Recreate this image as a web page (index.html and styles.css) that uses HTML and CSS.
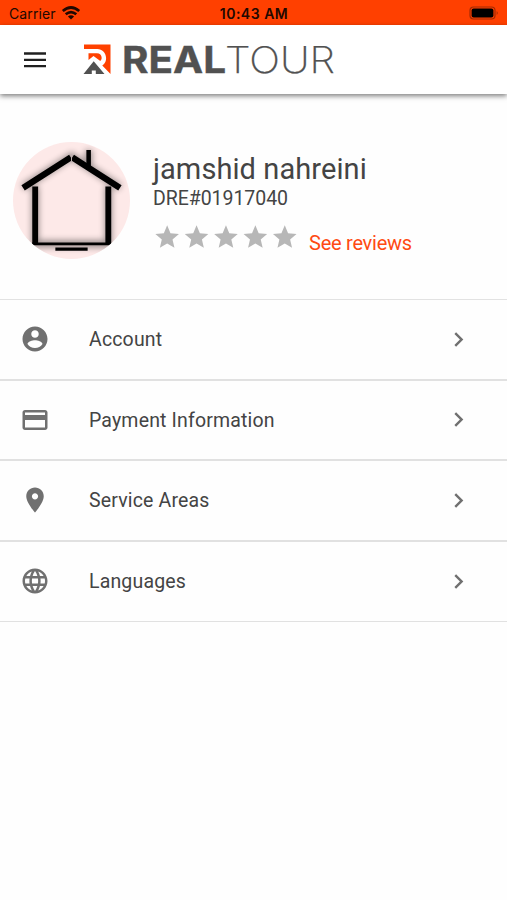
FILE: index.html
```html
<!DOCTYPE html>
<html lang="en">
<head>
<meta charset="utf-8">
<title>RealTour</title>
<link rel="stylesheet" href="styles.css">
</head>
<body>
<div class="status">
  <div class="carrier"><span>Carrier</span>
    <svg class="wifi" viewBox="0 0 18 14"><g fill="none" stroke="#210800" stroke-width="2.7"><path d="M.8 5Q9-2 17.200 5"/><path d="M3.700 8.300Q9 3.900 14.300 8.300"/></g><path d="M5.900 10.400Q9 7.900 12.100 10.400L9 13.600z" fill="#210800"/></svg>
  </div>
  <time class="clock">10:43 AM</time>
  <svg class="battery" viewBox="0 0 31 14"><rect x="1" y="1" width="25" height="12" rx="3.5" fill="none" stroke="#a32a03" stroke-width="1.2"/><rect x="2.6" y="2.6" width="21.8" height="8.8" rx="2" fill="#000"/><path d="M27.700 5Q29.800 7 27.700 9z" fill="#a32a03"/></svg>
</div>
<header class="bar">
  <svg class="menu" viewBox="0 0 24 18"><path d="M1 2.500h22M1 8.800h22M1 15.100h22" stroke="#202020" stroke-width="2.3"/></svg>
  <svg class="logo" viewBox="0 0 252 32" role="img" aria-label="RealTour">
    <path d="M1 .5h26.500v29.500L19.300 21.600Q23.300 18.800 23.100 14C22.800 8.500 19 5.200 14.500 5H1z" fill="#ff4100"/>
    <path d="M5.500 9.300H13.800Q18.500 9.300 18.700 14 18.700 15.500 17.300 17L10.500 12 5.500 16z" fill="#ff4100"/>
    <path d="M.5 30L10.700 17.300 21.500 30H12.800v-3.500H8.800V30z" fill="#515151"/>
    <text class="real" x="39" y="29" textLength="104" lengthAdjust="spacingAndGlyphs">REAL</text>
    <text class="tour" x="142" y="29" textLength="110" lengthAdjust="spacingAndGlyphs">TOUR</text>
  </svg>
</header>
<main>
  <section class="profile">
    <svg class="avatar" viewBox="0 0 116 116">
      <defs>
        <clipPath id="round"><circle cx="58" cy="58" r="58"/></clipPath>
        <filter id="soft" x="-20%" y="-20%" width="140%" height="140%"><feGaussianBlur stdDeviation="3"/></filter>
      </defs>
      <g clip-path="url(#round)">
        <path d="M0 0h116v116H0z" fill="#fde9e8"/>
        <g fill="none" stroke="#000">
          <path class="glow" d="M22 44v56M94.500 44v56M10 45L58 14 106 45M75 8v16M19 101h78" stroke-width="7" filter="url(#soft)"/>
          <path d="M22 44v57M94.500 44v57" stroke-width="5.800"/>
          <path d="M10 45.500L57.300 15.300M58.800 15.300L106 45.500" stroke-width="6.200"/>
          <path d="M75 8v16" stroke-width="4.500"/>
          <path d="M19 101h78" stroke-width="2.500"/>
          <path d="M42 106.200h32" stroke-width="3"/>
          <path d="M58 12v8" stroke="#bdb0b0" stroke-width="1"/>
        </g>
      </g>
    </svg>
    <div class="details">
      <h1>jamshid nahreini</h1>
      <p class="license">DRE#01917040</p>
      <div class="rating">
        <svg class="stars" viewBox="0 0 146 28"><defs><path id="star" d="M12 17.270L18.180 21l-1.640-7.030L22 9.240l-7.190-.61L12 2 9.190 8.630 2 9.240l5.460 4.730L5.820 21z"/></defs>
          <g fill="#b7b7b7"><use href="#star" transform="scale(1.180)"/><use href="#star" transform="translate(29.400) scale(1.180)"/><use href="#star" transform="translate(58.800) scale(1.180)"/><use href="#star" transform="translate(88.200) scale(1.180)"/><use href="#star" transform="translate(117.600) scale(1.180)"/></g></svg>
        <a class="reviews">See reviews</a>
      </div>
    </div>
  </section>
  <nav class="list">
    <a class="row"><svg class="icon" viewBox="0 0 24 24"><path d="M12 2C6.480 2 2 6.480 2 12s4.480 10 10 10 10-4.480 10-10S17.520 2 12 2zm0 3c1.660 0 3 1.340 3 3s-1.340 3-3 3-3-1.340-3-3 1.340-3 3-3zm0 14.200c-2.500 0-4.710-1.280-6-3.220.03-1.990 4-3.080 6-3.080 1.990 0 5.970 1.090 6 3.080-1.290 1.940-3.500 3.220-6 3.220z"/></svg><span class="label">Account</span><svg class="chevron" viewBox="0 0 24 24"><path d="M10 6L8.590 7.410 13.170 12l-4.580 4.590L10 18l6-6z"/></svg></a>
    <a class="row"><svg class="icon" viewBox="0 0 24 24"><path d="M20 4H4c-1.110 0-1.990.89-1.990 2L2 18c0 1.110.89 2 2 2h16c1.110 0 2-.89 2-2V6c0-1.110-.89-2-2-2zm0 14H4v-6h16v6zm0-10H4V6h16v2z"/></svg><span class="label">Payment Information</span><svg class="chevron" viewBox="0 0 24 24"><path d="M10 6L8.590 7.410 13.170 12l-4.580 4.590L10 18l6-6z"/></svg></a>
    <a class="row"><svg class="icon" viewBox="0 0 24 24"><path d="M12 2C8.130 2 5 5.130 5 9c0 5.250 7 13 7 13s7-7.750 7-13c0-3.870-3.130-7-7-7zm0 9.500c-1.380 0-2.500-1.120-2.500-2.500s1.120-2.500 2.500-2.500 2.500 1.120 2.500 2.500-1.120 2.500-2.500 2.500z"/></svg><span class="label">Service Areas</span><svg class="chevron" viewBox="0 0 24 24"><path d="M10 6L8.590 7.410 13.170 12l-4.580 4.590L10 18l6-6z"/></svg></a>
    <a class="row"><svg class="icon" viewBox="0 0 24 24"><path d="M11.990 2C6.470 2 2 6.480 2 12s4.470 10 9.990 10C17.520 22 22 17.520 22 12S17.520 2 11.990 2zm6.930 6h-2.950c-.32-1.250-.78-2.450-1.380-3.560 1.840.63 3.370 1.910 4.330 3.560zM12 4.040c.83 1.200 1.480 2.530 1.910 3.960h-3.820c.43-1.430 1.080-2.760 1.910-3.960zM4.260 14C4.100 13.360 4 12.690 4 12s.1-1.360.26-2h3.380c-.08.66-.14 1.320-.14 2s.06 1.340.14 2H4.260zm.82 2h2.950c.32 1.250.78 2.450 1.380 3.560-1.840-.63-3.370-1.900-4.330-3.560zm2.950-8H5.080c.96-1.660 2.490-2.930 4.330-3.560C8.810 5.550 8.350 6.750 8.030 8zM12 19.960c-.83-1.200-1.480-2.530-1.910-3.960h3.820c-.43 1.430-1.080 2.760-1.910 3.960zM14.340 14H9.660c-.09-.66-.16-1.320-.16-2s.07-1.350.16-2h4.680c.09.65.16 1.320.16 2s-.07 1.340-.16 2zm.25 5.560c.6-1.110 1.060-2.310 1.380-3.560h2.950c-.96 1.650-2.490 2.930-4.330 3.560zM16.360 14c.08-.66.14-1.320.14-2s-.06-1.340-.14-2h3.380c.16.64.26 1.310.26 2s-.1 1.360-.26 2h-3.380z"/></svg><span class="label">Languages</span><svg class="chevron" viewBox="0 0 24 24"><path d="M10 6L8.590 7.410 13.170 12l-4.580 4.590L10 18l6-6z"/></svg></a>
  </nav>
</main>
</body>
</html>
```
FILE: styles.css
```css
* { box-sizing: border-box; }
body { margin: 0; height: 900px; overflow: hidden; background: #fefefe; color: #444; font-family: Roboto, sans-serif; }
svg { display: block; flex: none; overflow: visible; }
.status { height: 25px; padding: 2px 7px 0 9px; background: #ff4000; display: grid; grid-template-columns: 1fr auto 1fr; align-items: center; font-family: Inter, sans-serif; color: #210800; }
.carrier { display: flex; align-items: center; gap: 6px; font-size: 14px; letter-spacing: .1px; }
.wifi { width: 18px; height: 14px; margin-top: -2px; }
.clock { font-size: 14px; font-weight: 600; letter-spacing: .5px; margin-right: 1px; }
.battery { width: 31px; height: 14px; margin-top: -1px; justify-self: end; }
.bar { height: 69px; padding-left: 23px; display: flex; align-items: center; background: #fff; box-shadow: 0 2px 5px rgba(0,0,0,.5); }
.menu { width: 24px; height: 18px; }
.logo { width: 252px; height: 32px; margin-left: 36px; }
.logo text { font-family: Inter, sans-serif; font-size: 36.5px; fill: #515151; }
.logo .real { font-weight: 700; stroke: #515151; stroke-width: .4px; }
.logo .tour { font-weight: 200; stroke: #515151; stroke-width: .25px; }
.profile { height: 205px; padding: 48px 13px 0; display: flex; gap: 23px; }
.avatar { width: 117px; height: 117px; }
.glow { opacity: .4; }
h1 { margin: 9px 0 0; font-size: 29px; line-height: 36px; font-weight: 400; letter-spacing: .08px; }
.license { margin: 0; font-size: 19.5px; line-height: 23px; letter-spacing: -.05px; }
.rating { display: flex; margin-top: 13px; }
.stars { width: 146px; height: 28px; margin-left: -.5px; }
.reviews { margin: 8px 0 0 10.5px; font-size: 20px; line-height: 24px; letter-spacing: -.25px; color: #ff4a12; }
.list { border-top: 1px solid #e2e2e2; }
.row { height: 80.5px; padding: 0 34px 0 20px; display: flex; align-items: center; border-bottom: 2px solid #e1e1e1; }
.row:last-child { border-bottom-width: 1px; }
.icon { width: 30px; height: 30px; fill: #707070; }
.label { flex: 1; margin: .5px 0 0 39px; font-size: 19.5px; letter-spacing: .16px; }
.chevron { width: 29px; height: 29px; fill: #707070; }
```
